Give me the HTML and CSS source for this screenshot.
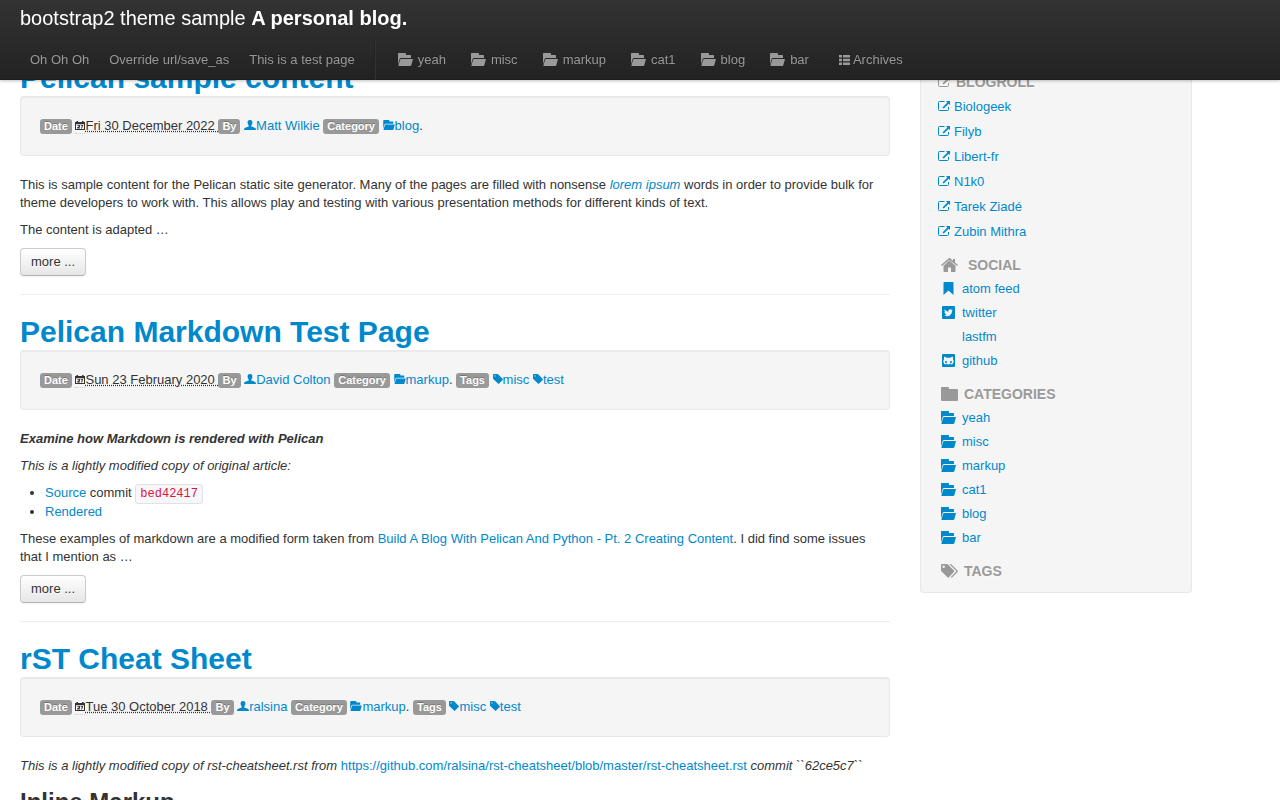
FILE: index.html
```html
<!DOCTYPE html>
<html lang="en">
<head>
<meta charset="utf-8">
<title>bootstrap2 theme sample</title>
<link rel="stylesheet" href="styles.css">
</head>
<body>
<svg class="sprite" aria-hidden="true">
  <symbol id="folder-open" viewBox="0 0 15 13"><path d="M0 0.7Q0 0 .7 0H7Q8 0 8 .8V2H12.4Q13 2 13 2.7V5H3.200Q1.900 5 1.600 6L0 11.500Z"/><path d="M3.200 6H15L13.300 12.200Q13 13 12.200 13H.3L2.100 6.800Q2.300 6 3.200 6Z"/></symbol>
  <symbol id="folder" viewBox="0 0 17 14"><path d="M1 0H7Q8 0 8 1V2H16Q17 2 17 3V13Q17 14 16 14H1Q0 14 0 13V1Q0 0 1 0Z"/></symbol>
  <symbol id="list" viewBox="0 0 11 10"><path d="M0 0H3V2.5H0ZM4 0H11V2.5H4ZM0 3.7H3V6.2H0ZM4 3.7H11V6.2H4ZM0 7.5H3V10H0ZM4 7.5H11V10H4Z"/></symbol>
  <symbol id="calendar" viewBox="0 0 10 9"><path fill-rule="evenodd" d="M0 1H1.5V0H3V1H7V0H8.5V1H10V9H0ZM1 3.2V8H9V3.2Z"/><path d="M2.3 4H5V6L3.7 6.6H5V7.4H2.2V6.2L4 5.2V4.8H2.3ZM5.8 4H8V4.8L7 7.4H6L7 4.8H5.8Z"/></symbol>
  <symbol id="user" viewBox="0 0 12 10"><path d="M6 0C7.9 0 8.5 1.2 8.4 2.8C8.3 4.3 7.6 5 7.3 5.6V6.6L10.8 7.8Q12 8.3 12 10H0Q0 8.3 1.2 7.8L4.7 6.6V5.6C4.4 5 3.7 4.3 3.6 2.8C3.5 1.2 4.1 0 6 0Z"/></symbol>
  <symbol id="tag" viewBox="0 0 10 10"><path fill-rule="evenodd" d="M0 .6Q0 0 .6 0H4.2Q4.9 0 5.4 .5L9.7 4.9Q10.2 5.4 9.7 5.9L6.1 9.6Q5.5 10.2 5 9.6L.5 5.2Q0 4.7 0 4.2ZM2 1.300A.6 .6 0 1 0 2 2.500A.6 .6 0 1 0 2 1.300Z"/></symbol>
  <symbol id="tags" viewBox="0 0 17 14"><path fill-rule="evenodd" d="M0 1Q0 0 1 0H5.6Q6.4 0 7 .6L12.9 6.6Q13.6 7.3 12.9 8L7.9 13.3Q7.2 14 6.5 13.3L.6 7.5Q0 6.8 0 6ZM2.7 1.5A1.2 1.2 0 1 0 2.7 3.9A1.2 1.2 0 1 0 2.7 1.5Z"/><path d="M8 0H9Q9.8 0 10.5 .6L16.5 6.6Q17.2 7.3 16.5 8L11.4 13.3Q10.5 14.2 9.7 13.3L15 7.8Q15.5 7.3 15 6.8L9.2 .9Q8.7 .4 8 0Z"/></symbol>
  <symbol id="home" viewBox="0 0 17 14"><path d="M8.5 2.6L14.5 7.8V13.2Q14.5 14 13.7 14H10V9.5H7V14H3.3Q2.5 14 2.5 13.2V7.8Z"/><path d="M0 7L7.800 .3Q8.500-.2 9.200 .3L12 2.700V1H14V4.400L17 7L16.200 8L8.500 2L.8 8Z"/></symbol>
  <symbol id="bookmark" viewBox="0 0 10 13"><path d="M0 .8Q0 0 .8 0H9.2Q10 0 10 .8V13L5 8.5L0 13Z"/></symbol>
  <symbol id="external" viewBox="0 0 12 10"><path fill="none" stroke="currentColor" d="M6.500 .5H1.500Q.5 .5 .5 1.500V8.500Q.5 9.500 1.500 9.500H9.500Q10.500 9.500 10.500 8.500V6"/><path d="M8 0H12V4L10.700 2.800L5.700 7.500L4.500 6.400L9.400 1.400Z"/></symbol>
  <symbol id="twitter" viewBox="0 0 1536 1536"><rect width="1536" height="1536" rx="130"/><path class="cut" transform="translate(-128 -128)" d="M1408 610q-56 25-121 34 68-40 93-117-65 38-134 51-61-66-153-66-87 0-148.500 61.500t-61.500 148.500q0 29 5 48-129-7-242-65t-192-155q-29 50-29 106 0 114 91 175-47-1-100-26v2q0 75 50 133.500t123 72.500q-29 8-51 8-13 0-39-4 21 63 74.500 104t121.500 42q-116 90-261 90-26 0-50-3 148 94 322 94 112 0 210-35.500t168-95 120.500-137 75-162 24.500-168.500q0-18-1-27 63-45 105-109z"/></symbol>
  <symbol id="github" viewBox="0 0 13 13"><rect width="13" height="13" rx="1"/><path class="cut" fill-rule="evenodd" d="M2.300 2.500Q3.500 2.800 4.700 3.700H8.300Q9.500 2.800 10.700 2.500Q11.300 4 11 5.200Q12 6.500 11.500 8.500Q11 10.500 9 10.600V9.700H7.500V10.600H5.500V9.700H4V10.600Q2 10.500 1.500 8.500Q1 6.500 2 5.200Q1.700 4 2.300 2.500ZM3.200 7V9H4.800V7ZM8.200 7V9H9.800V7Z"/></symbol>
</svg>

<header class="navbar">
  <a class="brand" href="#">bootstrap2 theme sample <strong>A personal blog.</strong></a>
  <nav class="nav">
    <a href="#">Oh Oh Oh</a>
    <a href="#">Override url/save_as</a>
    <a href="#">This is a test page</a>
    <span class="divider"></span>
    <a class="cat" href="#"><svg class="i-large"><use href="#folder-open"/></svg>yeah</a>
    <a class="cat" href="#"><svg class="i-large"><use href="#folder-open"/></svg>misc</a>
    <a class="cat" href="#"><svg class="i-large"><use href="#folder-open"/></svg>markup</a>
    <a class="cat" href="#"><svg class="i-large"><use href="#folder-open"/></svg>cat1</a>
    <a class="cat" href="#"><svg class="i-large"><use href="#folder-open"/></svg>blog</a>
    <a class="cat" href="#"><svg class="i-large"><use href="#folder-open"/></svg>bar</a>
    <a class="archives" href="#"><svg class="i-list"><use href="#list"/></svg>Archives</a>
  </nav>
</header>

<div class="page">
  <main>
    <article>
      <h1><a href="#">Pelican sample content</a></h1>
      <div class="well meta">
        <span class="label">Date</span>
        <span class="date-icon"><svg class="i-cal"><use href="#calendar"/></svg></span><abbr>Fri 30 December 2022&nbsp;</abbr><span class="label">By</span>
        <a href="#"><svg class="i-user"><use href="#user"/></svg>Matt Wilkie</a>
        <span class="label">Category</span>
        <a href="#"><svg class="i-folder"><use href="#folder-open"/></svg>blog</a>.
      </div>
      <p>This is sample content for the Pelican static site generator. Many of the pages are filled with nonsense <a href="#"><em>lorem ipsum</em></a> words in order to provide bulk for theme developers to work with. This allows play and testing with various presentation methods for different kinds of text.</p>
      <p>The content is adapted …</p>
      <a class="btn" href="#">more ...</a>
    </article>
    <hr>
    <article>
      <h1><a href="#">Pelican Markdown Test Page</a></h1>
      <div class="well meta">
        <span class="label">Date</span>
        <span class="date-icon"><svg class="i-cal"><use href="#calendar"/></svg></span><abbr>Sun 23 February 2020&nbsp;</abbr><span class="label">By</span>
        <a href="#"><svg class="i-user"><use href="#user"/></svg>David Colton</a>
        <span class="label">Category</span>
        <a href="#"><svg class="i-folder"><use href="#folder-open"/></svg>markup</a>.
        <span class="label">Tags</span>
        <a href="#"><svg class="i-tag"><use href="#tag"/></svg>misc</a>
        <a href="#"><svg class="i-tag"><use href="#tag"/></svg>test</a>
      </div>
      <p><strong><em>Examine how Markdown is rendered with Pelican</em></strong></p>
      <p><em>This is a lightly modified copy of original article:</em></p>
      <ul class="links">
        <li><a href="#">Source</a> commit <code>bed42417</code></li>
        <li><a href="#">Rendered</a></li>
      </ul>
      <p>These examples of markdown are a modified form taken from <a href="#">Build A Blog With Pelican And Python - Pt. 2 Creating Content</a>. I did find some issues that I mention as …</p>
      <a class="btn" href="#">more ...</a>
    </article>
    <hr>
    <article>
      <h1><a href="#">rST Cheat Sheet</a></h1>
      <div class="well meta">
        <span class="label">Date</span>
        <span class="date-icon"><svg class="i-cal"><use href="#calendar"/></svg></span><abbr>Tue 30 October 2018&nbsp;</abbr><span class="label">By</span>
        <a href="#"><svg class="i-user"><use href="#user"/></svg>ralsina</a>
        <span class="label">Category</span>
        <a href="#"><svg class="i-folder"><use href="#folder-open"/></svg>markup</a>.
        <span class="label">Tags</span>
        <a href="#"><svg class="i-tag"><use href="#tag"/></svg>misc</a>
        <a href="#"><svg class="i-tag"><use href="#tag"/></svg>test</a>
      </div>
      <p><em>This is a lightly modified copy of rst-cheatsheet.rst from</em> <a href="#">https://github.com/ralsina/rst-cheatsheet/blob/master/rst-cheatsheet.rst</a> <em>commit ``62ce5c7``</em></p>
      <h2>Inline Markup</h2>
    </article>
  </main>

  <aside class="well sidebar">
    <section class="blogroll">
      <h4><svg class="i-ext"><use href="#external"/></svg>Blogroll</h4>
      <ul>
        <li><a href="#"><svg class="i-ext"><use href="#external"/></svg>Biologeek</a></li>
        <li><a href="#"><svg class="i-ext"><use href="#external"/></svg>Filyb</a></li>
        <li><a href="#"><svg class="i-ext"><use href="#external"/></svg>Libert-fr</a></li>
        <li><a href="#"><svg class="i-ext"><use href="#external"/></svg>N1k0</a></li>
        <li><a href="#"><svg class="i-ext"><use href="#external"/></svg>Tarek Ziadé</a></li>
        <li><a href="#"><svg class="i-ext"><use href="#external"/></svg>Zubin Mithra</a></li>
      </ul>
    </section>
    <section class="social">
      <h4><svg class="i-head"><use href="#home"/></svg>Social</h4>
      <ul>
        <li><a href="#"><svg class="i-large"><use href="#bookmark"/></svg>atom feed</a></li>
        <li><a href="#"><svg class="i-large"><use href="#twitter"/></svg>twitter</a></li>
        <li><a href="#"><svg class="i-large"></svg>lastfm</a></li>
        <li><a href="#"><svg class="i-large"><use href="#github"/></svg>github</a></li>
      </ul>
    </section>
    <section>
      <h4><svg class="i-head"><use href="#folder"/></svg>Categories</h4>
      <ul>
        <li><a href="#"><svg class="i-large"><use href="#folder-open"/></svg>yeah</a></li>
        <li><a href="#"><svg class="i-large"><use href="#folder-open"/></svg>misc</a></li>
        <li><a href="#"><svg class="i-large"><use href="#folder-open"/></svg>markup</a></li>
        <li><a href="#"><svg class="i-large"><use href="#folder-open"/></svg>cat1</a></li>
        <li><a href="#"><svg class="i-large"><use href="#folder-open"/></svg>blog</a></li>
        <li><a href="#"><svg class="i-large"><use href="#folder-open"/></svg>bar</a></li>
      </ul>
    </section>
    <section>
      <h4><svg class="i-head"><use href="#tags"/></svg>Tags</h4>
    </section>
  </aside>
</div>
</body>
</html>
```
FILE: styles.css
```css
* { box-sizing: border-box; }
html { overflow: hidden; }
body {
  margin: 0;
  background: #fff;
  color: #333;
  font: 13px/18px "Liberation Sans", Arial, sans-serif;
}
a { color: #08c; text-decoration: none; }
svg { fill: currentColor; }
.sprite { display: none; }
.cut { fill: #f5f5f5; }

.i-large { width: 15px; height: 13px; margin-bottom: 1px; }
.i-head { width: 17px; height: 14px; }
.i-list { width: 11px; height: 10px; }
.i-ext { width: 12px; height: 10px; margin-bottom: 1px; }
.i-cal { display: block; width: 10px; height: 9px; }
.i-user { width: 12px; height: 10px; }
.i-folder { width: 12px; height: 10px; }
.i-tag { width: 10px; height: 10px; }

.navbar {
  position: fixed;
  z-index: 10;
  top: 0;
  left: 0;
  right: 0;
  padding: 0 20px;
  background: linear-gradient(#333, #222);
  box-shadow: 0 1px 3px rgba(0, 0, 0, .25), inset 0 -1px 0 rgba(0, 0, 0, .1);
}
.brand {
  display: block;
  padding: 8px 0 12px;
  color: #fff;
  font-size: 20px;
  line-height: 20px;
}
.nav { display: flex; height: 40px; }
.nav a {
  display: flex;
  align-items: center;
  padding: 0 10px;
  color: #999;
  text-shadow: 0 -1px 0 rgba(0, 0, 0, .25);
}
.divider {
  width: 2px;
  margin: 0 9px;
  border-left: 1px solid #222;
  border-right: 1px solid #333;
}
.nav .cat { gap: 5px; padding: 0 12px 0 13px; }
.nav .archives { gap: 3px; padding-left: 18px; }

.page {
  display: grid;
  grid-template-columns: minmax(0, 870fr) minmax(0, 272fr);
  gap: 30px;
  align-items: start;
  max-width: 1212px;
  padding: 60px 20px 0;
}
h1, h2, h4, p { margin: 0; }
p { margin-bottom: 9px; }
h1 { font-size: 30px; line-height: 36px; }
h2 { font-size: 24px; line-height: 36px; }
hr {
  margin: 18px 0;
  border: 0;
  border-top: 1px solid #eee;
  border-bottom: 1px solid #fff;
}

.well {
  background: #f5f5f5;
  border: 1px solid rgba(0, 0, 0, .05);
  border-radius: 4px;
  box-shadow: inset 0 1px 1px rgba(0, 0, 0, .05);
}
.meta { margin-bottom: 20px; padding: 20px 19px; }
.label {
  padding: 1px 4px 2px;
  border-radius: 3px;
  background: #999;
  color: #fff;
  font-size: 11px;
  font-weight: bold;
  line-height: 14px;
  text-shadow: 0 -1px 0 rgba(0, 0, 0, .25);
}
abbr { text-decoration: underline dotted; }
.date-icon {
  display: inline-block;
  height: 13px;
  vertical-align: -4px;
  border-bottom: 1px dotted #ccc;
}

.btn {
  display: inline-block;
  vertical-align: top;
  padding: 4px 10px;
  border: 1px solid #ccc;
  border-bottom-color: #b3b3b3;
  border-radius: 4px;
  background: linear-gradient(#fff, #e6e6e6);
  box-shadow: inset 0 1px 0 rgba(255, 255, 255, .2), 0 1px 2px rgba(0, 0, 0, .05);
  color: #333;
  text-shadow: 0 1px 1px rgba(255, 255, 255, .75);
}
.links { margin: 0 0 9px 25px; padding: 0; }
code {
  padding: 2px 4px;
  border: 1px solid #e1e1e8;
  border-radius: 3px;
  background: #f7f7f9;
  color: #d14;
  font: 12px/18px "Liberation Mono", monospace;
}

.sidebar { padding: 9px 20px; text-shadow: 0 1px 0 rgba(255, 255, 255, .5); }
.sidebar section + section { margin-top: 9px; }
.sidebar ul { margin: 0; padding: 0; list-style: none; }
.sidebar h4, .sidebar li a {
  display: flex;
  align-items: center;
  gap: 6px;
  height: 24px;
}
.sidebar h4 {
  color: #999;
  font-size: 14px;
  text-transform: uppercase;
}
.sidebar .social h4 { gap: 10px; }
.sidebar .blogroll { margin-left: -3px; }
.sidebar .blogroll li a { gap: 4px; height: 25px; }
```
